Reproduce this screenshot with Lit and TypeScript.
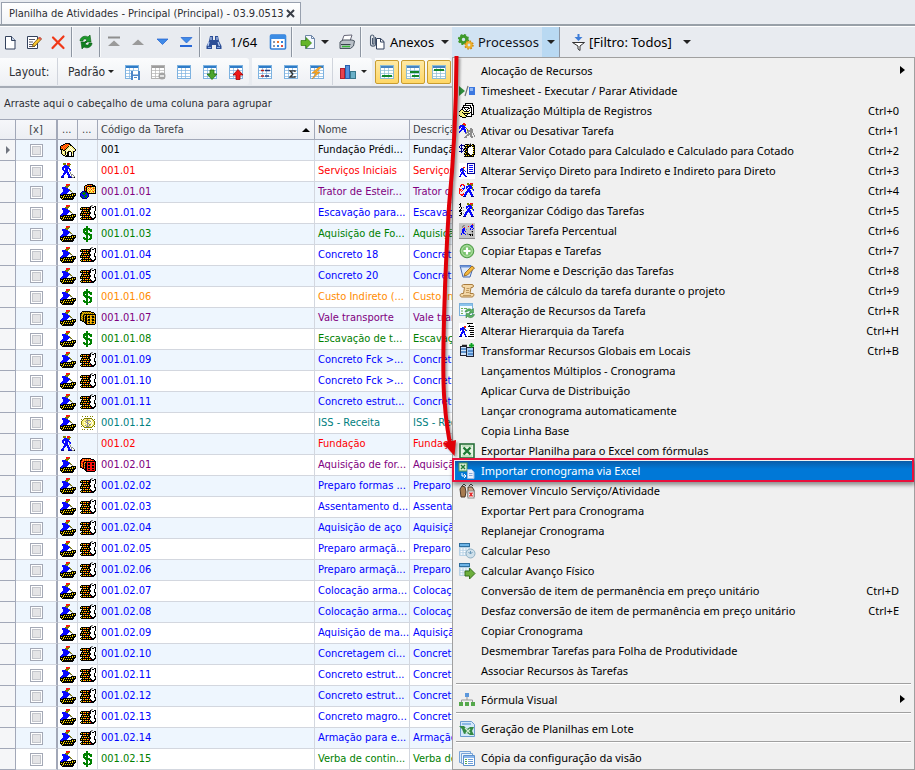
import { LitElement, html, css, svg, nothing, type TemplateResult, type SVGTemplateResult } from "lit";
import { customElement, property } from "lit/decorators.js";

/* ---------- pixel-art icons ---------- */

const INK: Record<string, string> = {
  k: "#000000", r: "#ff1010", b: "#0808ff", n: "#000090", o: "#808000",
  y: "#ffe000", Y: "#ffb000", g: "#8c8c8c", w: "#ffffff", G: "#008000", c: "#f8f080",
  l: "#c4c4c4",
};

const MAPS: Record<string, string[]> = {
  worker: [
    "......rrrr......",
    "......rroo......",
    ".....oooo.......",
    "..bbbboo........",
    "..bbbbbb........",
    "...bbbbbbo......",
    "...bbbbbbbo.....",
    "...bbbbbb.go....",
    "..bbbbbb....g...",
    ".bbbbbb....kkkkk",
    "nbbkkkkkkkkkykyk",
    "kkkkykykykykykkk",
    "kykykkkkkkkkkkk.",
    "kkkykykykykykk..",
    ".kykkkkkkkkkkk..",
    "..kkkkkkkkkkk...",
  ],
  digger: [
    "...ooo.rrr......",
    "...ooo.rroo.....",
    "....bbbooo......",
    "...bbbbbbo......",
    "..bbbbbbb.......",
    "..bb.bbbbb......",
    "..bb.bbb.bb.....",
    "...bbbbb.gb.....",
    "....bbbb.g......",
    "....bbbbb.g.....",
    "...bbb.bb.g.....",
    "...bb..bbb.gg...",
    "..bb....bb.gwg..",
    ".bbb....bbbgwwg.",
    ".nnn....nnnnggk.",
    "................",
  ],
  house: [
    "................",
    ".....kkkkk......",
    "...kkYrYrkk.....",
    ".kkrYrYrYckk....",
    "kYrYrYrYkccck...",
    "krYrYrYkccwcck..",
    "kYrYrYkccwcwcck.",
    "kkkYrkccwcwcwcck",
    ".kckkccwcccwcwck",
    ".kccckwckkkcckk.",
    ".kcwckckkwwkck..",
    ".kccckckkwwkck..",
    "..kcckwkkwwkwk..",
    "...kkckkkwwkck..",
    ".....kkkkkkkkk..",
    "................",
  ],
  material: [
    "...........gg...",
    "..........kg..kk",
    ".kkkkkkkkkk.kkwk",
    "kykyrykyrkkwwwwk",
    "kkkkkkkkkkkwwwwk",
    "..kyrykykkwwwwwk",
    ".kkkkkkkkkwwwwk.",
    ".kykyrykykkwwwk.",
    "kkkkkkkkkkkwwwk.",
    "kykyrykyrkwwwwkk",
    "kkkkkkkkkkwwwwwk",
    "..kykyrykykwwwwk",
    ".kkkkkkkkkkkwwkk",
    "kykyrykykyrkkkk.",
    ".kkkkkkkkkkkkk..",
    "................",
  ],
  dollar: [
    "......GG........",
    "......GG........",
    "....GGGGGG......",
    "...GGGGGGGGG....",
    "...GGGGG.GGG....",
    "...GG.GG..GG....",
    "...GGGGG........",
    "....GGGGGG......",
    ".....GGGGGGG....",
    "......GG.GGG....",
    "......GG..GG....",
    "...GG.GG..GG....",
    "...GGGGG.GGG....",
    "....GGGGGGG.....",
    "......GG........",
    "......GG........",
  ],
  diceY: [
    "................",
    "..kkkkkkkkk.....",
    ".kYoYoYoYoYkkk..",
    "kkoYoYoYoYoYoYk.",
    "koYokkkkkkkkkkkk",
    "koYkoYkYYoYYoYYk",
    "kYokYkkYkkYokkYk",
    "koYkokkokkYYkkok",
    "kYokYkkYYoYYoYYk",
    "koYkokkYkkYokkYk",
    "kkokYkkokkYYkkok",
    "..kkokkYYoYYoYYk",
    "....kkkYkkYokkYk",
    ".....kkYYoYYoYYk",
    "......kkkkkkkkk.",
    "................",
  ],
  diceR: [
    "................",
    "..kkkkkkkkk.....",
    ".krYrYrYrYrkkk..",
    "kkrYrYrYrYrYrrk.",
    "krYrkkkkkkkkkkkk",
    "krrkrYkrrrrrrrrk",
    "kYrkYkkrkkrrkkrk",
    "krYkrkkrkkrrkkrk",
    "kYrkYkkrrrrrrrrk",
    "krYkrkkrkkrrkkrk",
    "kkrkYkkrkkrrkkrk",
    "..kkrkkrrrrrrrrk",
    "....kkkrkkrrkkrk",
    ".....kkrrrrrrrrk",
    "......kkkkkkkkk.",
    "................",
  ],
  equipment: [
    ".......kkkkkk...",
    ".....kkYrYrYkkk.",
    "....kYrkkkkkkkkk",
    "....kYkYcYrYcYck",
    "....krkcrcYcYrYk",
    "....kYkYcYcrcYck",
    "....krkcYcYcYcYk",
    "..nnnkkYcrYcYrck",
    ".nbGGnnkcYcYcYck",
    "nbGGGGbnkkkkkkkk",
    "nbbGGbbbn.......",
    "nbbbbGGbn.......",
    "nGbbGGGbn.......",
    ".nGbbGbn........",
    "..nnnnn.........",
    "................",
  ],
  coin: [
    "................",
    "..o..o.o..o.o...",
    "................",
    "....oooooooo....",
    ".o.occcgccwco.o.",
    "..occcggggcwco..",
    ".occcgcgccgwcco.",
    ".occwcggccwcwco.",
    ".occccwggwccwco.",
    ".occwccgcggwcco.",
    "..occgcgcgcwco..",
    ".o.ocwgggccco.o.",
    "....oooooooo....",
    "................",
    "..o.o..o..o.o...",
    "................",
  ],
  hand: [
    "......kkkkkkkk..",
    "......kwwwwwwk..",
    "....kkkkkkkkwkk.",
    "....kwwwwwwkwwk.",
    "...kkkkkkkwkkwk.",
    "...kwkwwwkkwkwk.",
    "..kk.wkwkwwwkwk.",
    ".kcckwwkwwkwkwk.",
    "kcccckkkkkwwkwk.",
    "ccckccccccckkwk.",
    "cccckkkkkkkwkwk.",
    "ccccckcckwwwkkk.",
    "kccccckkwwwwk...",
    ".kkcccckkkkkk...",
    "...kkkk.........",
    "................",
  ],
  toggle: [
    "....rr..........",
    "...orrr.........",
    ".bbbboo.........",
    "bbbbbb..........",
    "bb.bbbb.........",
    "b.bbbb.o...gg...",
    "..bbbbb.o..ggg..",
    ".bb..bb.oggggg..",
    "bb...bb.gggggg..",
    "b.....bggg.ggg..",
    "......gg.gggg.g.",
    "........ggggg.g.",
    ".......ggg.gg..g",
    "......gg...ggg.g",
    ".....ggg....gg..",
    "................",
  ],
  quoted: [
    "...........g....",
    "..n...kkkkgk.kk.",
    ".nnnnkwykykkkykk",
    "n.n..kkkkkkkwkkk",
    "n.n...kykkwwwwyk",
    ".nnn.kkkkwwwwwkk",
    "..n.nkykkwwwwwyk",
    "..n.n.kkkwwwwwkk",
    "nnnn.kkykwwwwwyk",
    "..n...kkkwwwwwkk",
    ".....kykkkwwwwyk",
    ".....kkkkkkwwkkk",
    "......kykykkkyk.",
    ".....kkkkkkkkkk.",
    "................",
    "................",
  ],
  direct: [
    "wwwwwwwwnnnnnnnn",
    "wwwwwwwwnwwwwwwn",
    "wwwwwwwwnwbbbbwn",
    "wwwwwwwwnwwwwwwn",
    "wwwwrrwwnwbbbbwn",
    "wwbbowwwnwwwwwwn",
    "wbbbbwwwnwbbbbwn",
    "wbbbobwwnwwwwwwn",
    "wbwbbwbwnwbbbbwn",
    "wwbbbwwwnwwwwwwn",
    "wwbbbbwwnnnnnnnn",
    "wbbwbbwwwwwwwwww",
    "wbwwwbbwwwwwwwww",
    "nbwwwwbnwwwwwwww",
    "wwwwwwwwwwwwwwww",
    "wwwwwwwwwwwwwwww",
  ],
  swap: [
    "........oo.rrr..",
    "..rrr...oooroo..",
    ".rb.rr...bbboo..",
    ".r...b.bbbbbb...",
    ".....b.bb.bbbo..",
    "r..bbb.b.bbbbo..",
    "rrr.b...bbb..ob.",
    "rr.r....bbbb..b.",
    "r.r....bbbbb....",
    "r.....bbb.bbb...",
    "r...r.bb...bb...",
    ".rrrrbbb...bbb..",
    "..rr.bb.....bb..",
    "....nnn.....nnn.",
    "................",
    "................",
  ],
  reorder: [
    ".k......oo.rrr..",
    "kk......oooroo..",
    ".k.......bbboo..",
    ".k.....bbbbbb...",
    "k.k.g..bb.bbbo..",
    "..k....b.bbbbo..",
    ".k......bbb..ob.",
    "kkk.g...bbbb..b.",
    "kk.....bbbbb....",
    "..k...bbb.bbb...",
    ".kk.g.bb...bb...",
    "..k..bbb...bbb..",
    "kk...bb.....bb..",
    "....nnn.....nnn.",
    "................",
    "................",
  ],
  percent: [
    "llllllllllllllll",
    "lllllllllllllrll",
    "llllggllllllbbgl",
    "lllggllllrlbbbll",
    "lllglrllllllbbll",
    "llllbblllllbllbl",
    "lllbbblglllblbll",
    "lllbbbllllllllll",
    "lllbblblllllgkll",
    "lllbbllllllllgll",
    "llblbbllgllllgll",
    "llblllblggkkgkll",
    "lllllllllllklkll",
    "llllllllllllllll",
    "llllllllllllllll",
    "gggggggggggggggg",
  ],
  hierarchy: [
    "wwwwwwwwkkkkkkww",
    "wwwwwwwwwwwwwwww",
    "wwwwwwwwwwkwwwww",
    "wwwwwrrwwkkkkkkw",
    "wwwbborwwwwwwwww",
    "wbbbbbwwwwwkkkkw",
    "wbbbbobwwwwwwwww",
    "wbwbbwobwwkkkkkw",
    "wwwbbbwwwwwwwwww",
    "wwbbbbwwwwwkkkkw",
    "wwbbwbwwwwwwwwww",
    "wbbwwbbwwwwkkkkw",
    "wbbwwwbwwwwwwwww",
    "nnnwwwnnwkkkkkkw",
    "wwwwwwwwwwwwwwww",
    "wwwwwwwwwwwwwwww",
  ],
};

function pixels(name: string): SVGTemplateResult[] {
  const byInk = new Map<string, string>();
  MAPS[name].forEach((row, y) => {
    for (let x = 0; x < row.length; ) {
      const ch = row[x];
      let end = x + 1;
      while (row[end] === ch) end++;
      if (ch !== ".") byInk.set(ch, (byInk.get(ch) ?? "") + `M${x} ${y}h${end - x}v1h-${end - x}z`);
      x = end;
    }
  });
  return [...byInk].map(([ch, d]) => svg`<path d=${d} fill=${INK[ch]} shape-rendering="crispEdges"/>`);
}

/* ---------- vector icons ---------- */

const sheet = (line = "#7db2e0", head = "#2f7cc8") => svg`
  <rect x="1.5" y="1.5" width="13" height="13" fill="#fff" stroke=${line}/>
  <path d="M2 2h12v2H2z" fill=${head}/>
  <path d="M2 6.5h12M2 9.5h12M2 12.5h12M5.5 4v10M9.5 4v10" stroke=${line} opacity=".7"/>`;

const calculator = svg`
  <rect x="0" y="0" width="11" height="13" rx="1" fill="#b9d3e6"/>
  <path d="M0 0h11v4H0z" fill="#2f6f9f"/><path d="M1 1h9v2H1z" fill="#6db4e6"/>
  <path d="M1.5 6h2M4.5 6h2M7.5 6h2M1.5 8.5h2M4.5 8.5h2M1.5 11h2M4.5 11h2" stroke="#fff" stroke-width="1.5"/>`;

const VECTORS: Record<string, SVGTemplateResult> = {
  page: svg`<path d="M3.5 2.5h6l3.5 3.5v9H3.5z" fill="#fff" stroke="#33415c"/><path d="M9.5 2.5v4h4" fill="#c8d4e8" stroke="#33415c"/>`,
  edit: svg`<path d="M1.5 2.5h10v12h-10z" fill="#fff" stroke="#33415c"/><path d="M3 5.5h6M3 8h4M3 10.5h4M3 12.5h6" stroke="#556"/><path d="m7 10 6.5-7 2 2L9 12l-2.5.7z" fill="#f7c52e" stroke="#6b4a10" stroke-width=".8"/><path d="m13 3.5 2 2" stroke="#d55" stroke-width="2"/>`,
  remove: svg`<path d="M3 3.5 13.5 14M13.5 2.5 2.5 14" stroke="#f03818" stroke-width="2.2" stroke-linecap="round"/>`,
  refresh: svg`<path d="M2 7c0-4 5-6 8-4l2-2 1 7-6 0 2-2C7 4 5 5 5 7z" fill="#1c9a2c" stroke="#0c5c14" stroke-width=".6"/><path d="M14 9c0 4-5 6-8 4l-2 2-1-7h6l-2 2c2 2 4 1 4-1z" fill="#108020" stroke="#0c5c14" stroke-width=".6"/>`,
  first: svg`<path d="M2 3.5h12" stroke="#8f8f8f" stroke-width="2"/><path d="M8 6.5 14 12H2z" fill="#9a9a9a"/>`,
  prev: svg`<path d="M8 5.5 14 11H2z" fill="#9a9a9a"/>`,
  next: svg`<path d="M3 5h11l-5.5 5.5z" fill="#3f8ae8" stroke="#2060d0" stroke-width=".7"/>`,
  last: svg`<path d="M3 3.5h11L8.5 9z" fill="#3f8ae8" stroke="#2060d0" stroke-width=".7"/><path d="M2 12h12" stroke="#2868d8" stroke-width="2"/>`,
  binoculars: svg`<path d="M4 2h3v4h2V2h3l1 5 2.5 5v3H10v-4H6v4H.5v-3L3 7z" fill="#2c4e96"/><path d="M5 3v3M11 3v3M3 8l-1 4M12 8l1.5 4" stroke="#b8cef4" stroke-width="1.2"/><path d="M2 13.5h3M11 13.5h3" stroke="#7fa4e0"/>`,
  calendar: svg`<rect x=".5" y="1" width="15" height="14" rx="1" fill="#fff" stroke="#3480d8" stroke-width="1.6"/><path d="M0 1h16v4H0z" fill="#3c8ce4"/><path d="M3 8h2M3 12h2" stroke="#8e98a8" stroke-width="2"/><path d="M7 8h2" stroke="#f0772c" stroke-width="2"/><path d="M11 8h2M7 12h2" stroke="#3480d8" stroke-width="2"/><path d="M11 12h2" stroke="#e04a3c" stroke-width="2"/>`,
  forward: svg`<path d="M5.5 1.5h6l3 3v10h-9z" fill="#f4f8ff" stroke="#6f87a8"/><path d="M11.5 1.5v3h3" fill="none" stroke="#6f87a8"/><path d="M1 6.5h5v-3L11.5 9 6 14.5v-3H1z" fill="#64b52a" stroke="#2f7a0c" stroke-width=".7"/>`,
  printer: svg`<path d="m5 1.5 8-.5-2 6H3z" fill="#fff" stroke="#667"/><path d="m1 8 3-2h9l2.5 1-1 5-3 2.5H1z" fill="#b9c0c8" stroke="#4a5560"/><path d="M2 10.5h9.5" stroke="#39444e"/><path d="M3 12.5h8" stroke="#38b838" stroke-width="1.5"/>`,
  clip: svg`<path d="M7.5 4.5h4l3.5 3v7.5H7.5z" fill="#fff" stroke="#33415c"/><path d="M11.5 4.5V8H15" fill="none" stroke="#33415c"/><path d="M6.5 3v7c0 2.8-5 2.8-5 0V3c0-2.6 3.5-2.6 3.5 0v6.5c0 1-1.5 1-1.5 0V4" fill="none" stroke="#4a5a70" stroke-width="1.1"/>`,
  gears: svg`<circle cx="5.5" cy="5.5" r="3.2" fill="none" stroke="#3f9a2c" stroke-width="3"/><circle cx="5.5" cy="5.5" r="4.8" fill="none" stroke="#3f9a2c" stroke-width="1.6" stroke-dasharray="2 1.77"/><circle cx="11" cy="11" r="2.6" fill="none" stroke="#eeb02a" stroke-width="2.4"/><circle cx="11" cy="11" r="4" fill="none" stroke="#d08a10" stroke-width="1.5" stroke-dasharray="1.6 1.54"/>`,
  funnel: svg`<path d="M2.5 8.5h12L10 12v4.5l-2-1.5v-3z" fill="#fff" stroke="#333"/><path d="M7.5 0h2v3h3l-4 4-4-4h3z" fill="#3c7cd8"/>`,
  layoutSave: svg`${sheet()}<path d="M7 7h9v9H7z" fill="#4c86c8"/><path d="M9 7h5v3.5H9zM9 12h5v4H9z" fill="#fff"/><path d="M10 13.5h3" stroke="#4c86c8"/>`,
  layoutOff: svg`${sheet("#b4b4b4", "#9c9c9c")}<circle cx="12" cy="12" r="3.5" fill="#a4a4a4"/><path d="M10 12h4" stroke="#fff" stroke-width="1.4"/>`,
  layout: svg`${sheet()}`,
  layoutDown: svg`${sheet()}<path d="M8 6h4v4h3l-5 5.5L5 10h3z" fill="#4ba52c" stroke="#23700e" stroke-width=".8"/>`,
  layoutUp: svg`${sheet()}<path d="M8 15.5h4V11h3l-5-5.5L5 11h3z" fill="#f01818" stroke="#a00000" stroke-width=".8"/>`,
  viewA: svg`${sheet()}<path d="M4 6.5h3M4 12h3" stroke="#b02020" stroke-width="1.5"/><path d="M8 6.5h5M8 12h4" stroke="#233a78" stroke-width="1.5"/>`,
  viewSum: svg`${sheet()}<path d="M12 8V6.8H7L9.8 10 7 13.2h5V12" fill="none" stroke="#333" stroke-width="1.3"/>`,
  viewFlash: svg`${sheet()}<path d="M10 3 3 9h4l-4 6 8-7H7.5l5-5z" fill="#f7a823" stroke="#d07c08" stroke-width=".5"/>`,
  chart: svg`<rect x=".5" y="4.5" width="4" height="10" fill="#e8424e" stroke="#b02030"/><rect x="5.5" y="1.5" width="4" height="13" fill="#5490dc" stroke="#2860b0"/><rect x="10.5" y="7.5" width="5" height="7" fill="#6ab0c8" stroke="#38788c"/>`,
  rowBottom: svg`${sheet("#8cbcd4", "#4684c4")}<path d="M3 11h10v2H3z" fill="#11862c"/>`,
  rowMiddle: svg`${sheet("#8cbcd4", "#4684c4")}<path d="M5 7h9v2H5zM7 11h7v2H7z" fill="#11862c"/>`,
  rowTop: svg`${sheet("#8cbcd4", "#4684c4")}<path d="M3 5h10v2H3z" fill="#11862c"/>`,
  playStop: svg`<path d="M0 3l6 5-6 5z" fill="#2f8c3c"/><path d="M6 13 9 3" stroke="#777" stroke-width="1.2"/><rect x="10" y="4" width="6" height="8" fill="#3c78e0"/><path d="M11 5h3v3h-3z" fill="#92b8f4"/>`,
  plus: svg`<circle cx="8" cy="8" r="6.8" fill="#7cc470" stroke="#4f9a48"/><circle cx="8" cy="8" r="5.3" fill="none" stroke="#b4e0a8"/><path d="M8 4.5v7M4.5 8h7" stroke="#fff" stroke-width="2.2"/>`,
  note: svg`<path d="M1 2.5h11l2 2-3 9.5H4z" fill="#dce8fa" stroke="#4468b0"/><path d="M1 2.5h11v2H2z" fill="#6c94d8"/><path d="m6 10 7-7 2.5 2-7 7-3.5 1z" fill="#f5b83c" stroke="#8a5c14" stroke-width=".8"/>`,
  scroll: svg`<path d="M4.5 1.5H13c2 0 2 3 0 3h-1l-1 6h3c1.5 0 1 3.5-1 3.5H3c-2.5 0-2.5-3.5 0-3.5h1.5l1-6H4.5c-2 0-2-3 0-3z" fill="#f3d7a6" stroke="#a97c3e"/><path d="M7.5 5.5h3M7 7.5h3M7 9.5h3M4 12.5h8" stroke="#c09a60"/>`,
  resources: svg`<rect x=".5" y=".5" width="13" height="12" fill="#f4fbff" stroke="#7ab0dc"/><path d="M1 1h12v2H1z" fill="#8cc4ec"/><path d="M2 5.5h2M2 8h2M2 10.5h2M5 5.5h3" stroke="#6cae54"/><path d="M6 9c1-3.5 5-4 7-2l1.5-1.5V10H10l1.5-1.5c-1-1-3-.5-3.5.5zM15.5 11.5c-1 3.5-5 4-7 2L7 15v-4.5h4.5L10 12c1 1 3 .5 3.5-.5z" fill="#5cb060" stroke="#2c7c3c" stroke-width=".5"/>`,
  global: svg`<rect x="1.5" y="3.5" width="6" height="9" fill="#cfe4fa" stroke="#223"/><rect x="7.5" y="4.5" width="7" height="9" fill="#a4ccf4" stroke="#223"/><path d="M2 6h5M2 9h5M9 8h5M9 11h5" stroke="#3a78c0" stroke-width="1.5"/><path d="M3 2.5h5" stroke="#222" stroke-width="1.5"/><path d="M12.5 0v5M10 2.5h5" stroke="#0ca020" stroke-width="1.8"/>`,
  excel: svg`<rect x="1" y="1" width="14" height="14" fill="#e8f4e4" stroke="#28703a" stroke-width="1.6"/><path d="M3 3h10M3 13h10" stroke="#9ccc98"/><path d="m4.5 4.5 7 7M11.5 4.5l-7 7" stroke="#1f7a34" stroke-width="2.4"/>`,
  excelImport: svg`<rect x="0" y="0" width="8" height="8" fill="#dcecd8" stroke="#4c9a54"/><path d="m2 2 4 4M6 2 2 6" stroke="#1f7a34" stroke-width="1.4"/><path d="M3 10v3h3M5 11l2 2-2 2" fill="none" stroke="#fff"/><path d="M8.5 6.5h4l2.5 2.5v6.5H8.5z" fill="#e8f0fc" stroke="#9cb8e0"/><path d="M10 10.5h3.5M10 12.5h3.5" stroke="#88a8d8"/>`,
  unlink: svg`<path d="M1 6l2-3 3 1 1 5-1 5H2z" fill="#a87c50" stroke="#4c3828"/><path d="m3 3 2-2 2 2M10 3l2-2 2 2" fill="none" stroke="#333"/><path d="M9 4h4l2 3v7H9z" fill="#c8a888" stroke="#4c3828"/><rect x="9" y="8" width="6" height="7" fill="#fff" stroke="#888"/><path d="m10.5 9.5 3 4M13.5 9.5l-3 4" stroke="#e02828" stroke-width="1.3"/>`,
  weight: svg`${calculator}<circle cx="11.5" cy="10.5" r="4.5" fill="#cfe0ea" stroke="#8eb0c4"/><path d="M11.5 8v3M9.5 9l2 2 2-2" stroke="#6a98b8" fill="none"/>`,
  advance: svg`${calculator}<path d="M6 8h4.5V5L16 10.5 10.5 16v-3H6z" fill="#6cae3c" stroke="#35701a"/>`,
  tree: svg`<rect x="6" y="1" width="4" height="4" fill="#5c98dc"/><path d="M8 5v3M2.5 10V8h11v2" fill="none" stroke="#999"/><path d="M0 10h4v4H0zM6 10h4v4H6zM12 10h4v4h-4z" fill="#55a84c"/>`,
  batch: svg`<path d="M1.5.5h11l3 3v12h-14z" fill="#d4e8fa" stroke="#6c9cd0"/><path d="M3 3h9" stroke="#8cb8e4" stroke-width="2"/><path d="M0 5l5 0 3 3 3-2h4l-2 4 2 4h-4l-3-2-3 1-2-5z" fill="#348a44"/><path d="m6 7 5 5M11 8l-4 4" stroke="#d4ecd4" stroke-width="1.2"/>`,
  copyView: svg`<path d="M.5 1.5h11v11H.5z" fill="#e4effa" stroke="#78a4d8"/><path d="M2.5 3.5h11v10h-11z" fill="#eef6fd" stroke="#78a4d8"/><path d="M4.5 5.5h11v10h-11z" fill="#fff" stroke="#5c90cc"/><path d="M5 7h10" stroke="#8cb8ec" stroke-width="2"/><path d="M6 9.5h2M6 11.5h2M6 13.5h2" stroke="#58a848"/><path d="M9 9.5h5M9 11.5h5M9 13.5h5" stroke="#6c9cd8"/>`,
};

@customElement("ui-icon")
export class UiIcon extends LitElement {
  static styles = css`
    :host { display: inline-block; flex: none; width: 16px; height: 16px; }
    svg { display: block; overflow: visible; }
  `;
  @property() name = "";
  render() {
    return html`<svg width="16" height="16" viewBox="0 0 16 16" fill="none" aria-hidden="true">
      ${this.name in MAPS ? pixels(this.name) : VECTORS[this.name]}
    </svg>`;
  }
}

const icon = (name: string) => html`<ui-icon name=${name}></ui-icon>`;

/* ---------- menu ---------- */

interface Entry { label: string; icon?: string; keys?: string; sub?: boolean; active?: boolean; }

const MENU: (Entry | null)[] = [
  { label: "Alocação de Recursos", sub: true },
  { label: "Timesheet - Executar / Parar Atividade", icon: "playStop" },
  { label: "Atualização Múltipla de Registros", icon: "hand", keys: "Ctrl+0" },
  { label: "Ativar ou Desativar Tarefa", icon: "toggle", keys: "Ctrl+1" },
  { label: "Alterar Valor Cotado para Calculado e Calculado para Cotado", icon: "quoted", keys: "Ctrl+2" },
  { label: "Alterar Serviço Direto para Indireto e Indireto para Direto", icon: "direct", keys: "Ctrl+3" },
  { label: "Trocar código da tarefa", icon: "swap", keys: "Ctrl+4" },
  { label: "Reorganizar Código das Tarefas", icon: "reorder", keys: "Ctrl+5" },
  { label: "Associar Tarefa Percentual", icon: "percent", keys: "Ctrl+6" },
  { label: "Copiar Etapas e Tarefas", icon: "plus", keys: "Ctrl+7" },
  { label: "Alterar Nome e Descrição das Tarefas", icon: "note", keys: "Ctrl+8" },
  { label: "Memória de cálculo da tarefa durante o projeto", icon: "scroll", keys: "Ctrl+9" },
  { label: "Alteração de Recursos da Tarefa", icon: "resources", keys: "Ctrl+R" },
  { label: "Alterar Hierarquia da Tarefa", icon: "hierarchy", keys: "Ctrl+H" },
  { label: "Transformar Recursos Globais em Locais", icon: "global", keys: "Ctrl+B" },
  { label: "Lançamentos Múltiplos - Cronograma" },
  { label: "Aplicar Curva de Distribuição" },
  { label: "Lançar cronograma automaticamente" },
  { label: "Copia Linha Base" },
  { label: "Exportar Planilha para o Excel com fórmulas", icon: "excel" },
  { label: "Importar cronograma via Excel", icon: "excelImport", active: true },
  { label: "Remover Vínculo Serviço/Atividade", icon: "unlink" },
  { label: "Exportar Pert para Cronograma" },
  { label: "Replanejar Cronograma" },
  { label: "Calcular Peso", icon: "weight" },
  { label: "Calcular Avanço Físico", icon: "advance" },
  { label: "Conversão de item de permanência em preço unitário", keys: "Ctrl+D" },
  { label: "Desfaz conversão de item de permanência em preço unitário", keys: "Ctrl+E" },
  { label: "Copiar Cronograma" },
  { label: "Desmembrar Tarefas para Folha de Produtividade" },
  { label: "Associar Recursos às Tarefas" },
  null,
  { label: "Fórmula Visual", icon: "tree", sub: true },
  null,
  { label: "Geração de Planilhas em Lote", icon: "batch" },
  null,
  { label: "Cópia da configuração da visão", icon: "copyView" },
];

@customElement("process-menu")
export class ProcessMenu extends LitElement {
  static styles = css`
    :host {
      display: block; box-sizing: border-box; width: 463px; padding: 3px 2px 1px;
      background: #f0f0f0; border: 1px solid #a0a0a0;
      font: 11px/20px "Noto Sans", "Open Sans", sans-serif; color: #000;
    }
    .entry {
      position: relative; display: flex; align-items: center; box-sizing: border-box;
      width: 100%; height: 20px; margin: 0; padding: 0 13px 0 4px; border: 0;
      background: none; color: inherit; font: inherit; text-align: left; white-space: nowrap;
    }
    .glyph { flex: none; width: 22px; height: 16px; }
    .label { flex: 1; }
    .sub { padding-right: 7px; }
    .sub::after { content: ""; border: 4px solid transparent; border-left: 5px solid #000; border-right: 0; margin-bottom: 3px; }
    .active { background: linear-gradient(#0a5ca8, #0078d7 40%); color: #fff; }
    .active::before {
      content: ""; position: absolute; inset: -3px -2px -1px -3px; border: 2px solid #e8103c;
      box-shadow: 1px 3px 4px #00000066; pointer-events: none;
    }
    .line { height: 1px; margin: 2px 1px 5px; border: 0; border-top: 1px solid #a0a0a0; background: #fff; }
  `;
  render() {
    return html`${MENU.map((e) => e === null
      ? html`<hr class="line">`
      : html`<button type="button" role="menuitem"
          class="entry ${e.sub ? "sub" : ""} ${e.active ? "active" : ""}">
          <span class="glyph">${e.icon ? icon(e.icon) : nothing}</span>
          <span class="label">${e.label}</span>
          ${e.keys ? html`<span>${e.keys}</span>` : nothing}
        </button>`)}`;
  }
}

/* ---------- grid ---------- */

type Row = [code: string, name: string, desc: string, tone: string, kind: string, resource: string];

const ROWS: Row[] = [
  ["001", "Fundação Prédi...", "Fundação", "black", "house", ""],
  ["001.01", "Serviços Iniciais", "Serviços", "red", "digger", ""],
  ["001.01.01", "Trator de Esteir...", "Trator de", "purple", "worker", "equipment"],
  ["001.01.02", "Escavação para...", "Escavação", "blue", "worker", "material"],
  ["001.01.03", "Aquisição de Fo...", "Aquisição", "green", "worker", "dollar"],
  ["001.01.04", "Concreto 18", "Concreto", "blue", "worker", "material"],
  ["001.01.05", "Concreto 20", "Concreto", "blue", "worker", "material"],
  ["001.01.06", "Custo Indireto (...", "Custo Indireto", "orange", "worker", "dollar"],
  ["001.01.07", "Vale transporte", "Vale transp", "purple", "worker", "diceY"],
  ["001.01.08", "Escavação de t...", "Escavação", "green", "worker", "dollar"],
  ["001.01.09", "Concreto Fck >...", "Concreto", "blue", "worker", "material"],
  ["001.01.10", "Concreto Fck >...", "Concreto", "blue", "worker", "material"],
  ["001.01.11", "Concreto estrut...", "Concreto", "blue", "worker", "material"],
  ["001.01.12", "ISS - Receita", "ISS - Receita", "teal", "worker", "coin"],
  ["001.02", "Fundação", "Fundação", "red", "digger", ""],
  ["001.02.01", "Aquisição de for...", "Aquisição", "purple", "worker", "diceR"],
  ["001.02.02", "Preparo formas ...", "Preparo", "blue", "worker", "material"],
  ["001.02.03", "Assentamento d...", "Assentam", "blue", "worker", "material"],
  ["001.02.04", "Aquisição de aço", "Aquisição", "blue", "worker", "material"],
  ["001.02.05", "Preparo armaçã...", "Preparo", "blue", "worker", "material"],
  ["001.02.06", "Preparo armaçã...", "Preparo", "blue", "worker", "material"],
  ["001.02.07", "Colocação arma...", "Colocação", "blue", "worker", "material"],
  ["001.02.08", "Colocação arma...", "Colocação", "blue", "worker", "material"],
  ["001.02.09", "Aquisição de ma...", "Aquisição", "blue", "worker", "material"],
  ["001.02.10", "Concretagem ci...", "Concretag", "blue", "worker", "material"],
  ["001.02.11", "Concreto estrut...", "Concreto", "blue", "worker", "material"],
  ["001.02.12", "Concreto estrut...", "Concreto", "blue", "worker", "material"],
  ["001.02.13", "Concreto magro...", "Concreto", "blue", "worker", "material"],
  ["001.02.14", "Armação para e...", "Armação", "blue", "worker", "material"],
  ["001.02.15", "Verba de contin...", "Verba de", "green", "worker", "dollar"],
];

@customElement("task-grid")
export class TaskGrid extends LitElement {
  static styles = css`
    :host { display: block; overflow: hidden; background: #fff; }
    table { width: 100%; table-layout: fixed; border-collapse: separate; border-spacing: 0; }
    .c-mark { width: 16px; } .c-tick { width: 42px; } .c-icon { width: 20px; }
    .c-code { width: 217px; } .c-name { width: 95px; }
    th, td {
      box-sizing: border-box; height: 21px; padding: 0 3px; overflow: hidden;
      border: 0 solid #d3d7df; border-width: 0 1px 1px 0; line-height: 20px;
      text-align: left; font-weight: normal; white-space: nowrap;
    }
    th {
      border-color: #a2a8b8; border-top-width: 1px; color: #3c3f46; line-height: 18px;
      background: linear-gradient(#f6f7fa, #eceef3);
    }
    .mark { padding: 0; background: #f5f6f8; border-color: #a2a8b8; }
    .tick { padding: 0; text-align: center; border-right: 2px solid #a2a8b8; }
    .pic { padding: 0 1px 0 2px; }
    .pic ui-icon { display: block; }
    .dots { padding: 0 4px; }
    tbody tr:nth-child(odd) { background: #eef6fe; }
    .sort { display: flex; align-items: center; justify-content: space-between; }
    .sort::after { content: ""; border: 4px solid transparent; border-bottom-color: #000; border-top: 0; margin-right: 1px; }
    .arrow { display: block; margin-left: 6px; width: 0; border: 4px solid transparent; border-left-color: #70757f; border-right: 0; }
    input {
      appearance: none; display: block; box-sizing: border-box; width: 13px; height: 13px; margin: 0 auto;
      border: 1px solid #a4a9b6; background: #e4e4e6; box-shadow: inset 0 0 0 1px #fff, inset 0 0 0 2px #c4c6cc;
    }
    .black { color: #000; } .red { color: #f00; } .purple { color: #800080; } .blue { color: #00f; }
    .green { color: #008000; } .orange { color: #ff8c00; } .teal { color: #008080; }
  `;
  render() {
    return html`<table>
      <colgroup><col class="c-mark"><col class="c-tick"><col class="c-icon"><col class="c-icon">
        <col class="c-code"><col class="c-name"><col></colgroup>
      <thead><tr>
        <th></th><th class="tick">[x]</th><th class="dots">...</th><th class="dots">...</th>
        <th><span class="sort">Código da Tarefa</span></th><th>Nome</th><th>Descrição</th>
      </tr></thead>
      <tbody>${ROWS.map(([code, name, desc, tone, kind, resource], i) => html`<tr class=${tone}>
        <td class="mark">${i === 0 ? html`<span class="arrow"></span>` : nothing}</td>
        <td class="tick"><input type="checkbox" aria-label=${code}></td>
        <td class="pic">${icon(kind)}</td>
        <td class="pic">${resource ? icon(resource) : nothing}</td>
        <td>${code}</td><td>${name}</td><td>${desc}</td>
      </tr>`)}</tbody>
    </table>`;
  }
}

/* ---------- window ---------- */

const tool = (name: string, label: string, cls = ""): TemplateResult =>
  html`<button type="button" class="tool ${cls}" title=${label}>${icon(name)}</button>`;
const caret = html`<span class="caret"></span>`;

@customElement("app-root")
export class AppRoot extends LitElement {
  static styles = css`
    :host {
      display: flex; flex-direction: column; position: relative; box-sizing: border-box;
      height: 100vh; overflow: hidden; background: #e8ebf0; color: #2c2e33;
      font: 11px/16px "DejaVu Sans Condensed", "DejaVu Sans", sans-serif;
    }
    button { margin: 0; padding: 0; border: 0; background: none; color: inherit; font: inherit; }
    .tabs { display: flex; height: 22px; padding: 2px 1px 0; border-bottom: 2px solid #98a0a8; }
    .tab {
      display: flex; align-items: center; justify-content: space-between; box-sizing: border-box;
      width: 300px; padding: 0 5px 0 7px; border: 1px solid #98a0ae; border-bottom: 0;
      background: linear-gradient(#fff, #f1f3f6); white-space: nowrap;
    }
    .close { display: flex; }
    .bar { display: flex; height: 30px; border-top: 1px solid #fff; color: #000; font: 13px/16px "Noto Sans", sans-serif; }
    .group { display: flex; align-items: center; gap: 8px; padding: 0 5px; border-right: 1px solid #8e96a2; box-shadow: 1px 0 #f6f8fa; margin-right: 1px; }
    .group.lead { padding-left: 2px; }
    .tool { display: flex; align-items: center; flex: none; }
    .count { width: 32px; }
    .caret { flex: none; border: 4px solid transparent; border-top-color: #222; border-bottom: 0; }
    .drop { display: flex; align-items: center; gap: 5px; white-space: nowrap; }
    .attach { width: 90px; box-sizing: border-box; padding: 0 3px 0 7px; }
    .attach .caret { margin-left: auto; }
    .process { position: relative; display: flex; background: #d1e3f3; border-right: 1px solid #8e96a2; color: #10131a; }
    .main { display: flex; align-items: center; gap: 4px; width: 90px; padding-left: 6px; box-sizing: border-box; }
    .split { display: flex; align-items: center; justify-content: center; width: 17px; background: #b9d9f2; }
    .menu { position: absolute; left: 0; top: 100%; z-index: 2; }
    .filter { padding-left: 10px; gap: 3px; }
    .filter .caret { margin-left: 8px; }
    .out { margin: 0 2px; }
    .layouts { display: flex; height: 27px; padding: 1px 0; border-bottom: 2px solid #a6acb6; }
    .strip { display: flex; align-items: center; gap: 10px; padding: 0 5px; border-radius: 0 3px 3px 0; background: linear-gradient(#fbfcfd, #eef0f4); margin-right: 3px; }
    .strip .caret { border-width: 3px; border-bottom: 0; }
    .caption { display: flex; align-items: center; align-self: stretch; width: 53px; padding-left: 4px; box-sizing: border-box; border-right: 1px solid #d0d4dc; font-size: 12px; }
    .preset { gap: 3px; font-size: 12px; }
    .set { display: flex; gap: 10px; }
    .divider { align-self: stretch; width: 1px; margin: 0 -3px; background: #d0d4dc; }
    .toggles { gap: 2px; padding: 0; }
    .pressed { box-sizing: border-box; width: 24px; height: 24px; justify-content: center; border: 1px solid #c89c30; border-radius: 2px; background: linear-gradient(#ffe9a4, #ffd766); }
    .hint { padding: 8px 4px 7px; margin: 0; }
    task-grid { flex: 1; }
    .pointer { position: absolute; left: 436px; top: 56px; z-index: 3; overflow: visible; pointer-events: none; filter: drop-shadow(2px 2px 1px #0005); }
  `;
  render() {
    return html`
      <div class="tabs"><div class="tab"><span>Planilha de Atividades - Principal (Principal) - 03.9.0513</span>
        <button type="button" class="close" aria-label="Fechar">
          <svg width="9" height="9" viewBox="0 0 9 9"><path d="M1 1l7 7M8 1 1 8" stroke="#3a3f48" stroke-width="2"/></svg>
        </button></div></div>
      <div class="bar">
        <div class="group lead">${tool("page", "Novo")}${tool("edit", "Editar")}${tool("remove", "Excluir")}</div>
        <div class="group">${tool("refresh", "Atualizar")}</div>
        <div class="group">${tool("first", "Primeiro")}${tool("prev", "Anterior")}${tool("next", "Próximo")}${tool("last", "Último")}</div>
        <div class="group">${tool("binoculars", "Localizar")}<span class="count">1/64</span>${tool("calendar", "Colunas")}</div>
        <div class="group"><button type="button" class="drop out" aria-label="Exportar">${icon("forward")}${caret}</button>${tool("printer", "Imprimir")}</div>
        <button type="button" class="drop attach">${icon("clip")}Anexos${caret}</button>
        <div class="process">
          <button type="button" class="main">${icon("gears")}Processos</button>
          <button type="button" class="split" aria-label="Abrir processos">${caret}</button>
          <process-menu class="menu" role="menu"></process-menu>
        </div>
        <button type="button" class="drop filter">${icon("funnel")}[Filtro: Todos]${caret}</button>
      </div>
      <div class="layouts">
        <div class="strip"><span class="caption">Layout:</span>
          <button type="button" class="drop preset">Padrão${caret}</button>
          <div class="set">${tool("layoutSave", "Salvar")}${tool("layoutOff", "Remover")}${tool("layout", "Layout")}${tool("layoutDown", "Baixar")}${tool("layoutUp", "Enviar")}</div></div>
        <div class="strip">${tool("viewA", "Bandas")}${tool("viewSum", "Somar")}${tool("viewFlash", "Formatar")}<span class="divider"></span>
          <button type="button" class="drop" aria-label="Gráfico">${icon("chart")}${caret}</button></div>
        <div class="strip toggles">${tool("rowBottom", "Rodapé", "pressed")}${tool("rowMiddle", "Grupo", "pressed")}${tool("rowTop", "Topo", "pressed")}</div>
      </div>
      <p class="hint">Arraste aqui o cabeçalho de uma coluna para agrupar</p>
      <task-grid></task-grid>
      <svg class="pointer" width="24" height="402" viewBox="0 0 24 402" aria-hidden="true">
        <path d="M20.5 0C20 70 17 110 13 150C9 215 5 320 9 350C10 366 12 376 14 388" fill="none" stroke="#e00008" stroke-width="4"/>
        <path d="M7 387 20 384 18.5 400z" fill="#e00008"/>
      </svg>`;
  }
}
